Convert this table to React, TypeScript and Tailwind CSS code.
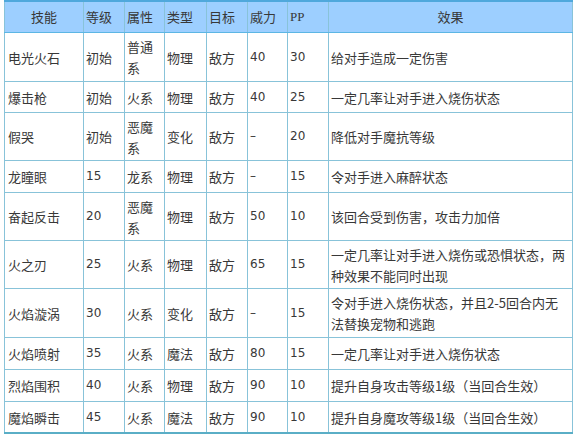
import React from "react";

type Row = { h: string; cells: React.ReactNode[] };

const rows: Row[] = [
  { h: "h-[49px]", cells: ["电光火石", "初始", <>普通<br />系</>, "物理", "敌方", "40", "30", "给对手造成一定伤害"] },
  { h: "h-[31px]", cells: ["爆击枪", "初始", "火系", "物理", "敌方", "40", "25", "一定几率让对手进入烧伤状态"] },
  { h: "h-[48px]", cells: ["假哭", "初始", <>恶魔<br />系</>, "变化", "敌方", "–", "20", "降低对手魔抗等级"] },
  { h: "h-[32px]", cells: ["龙瞳眼", "15", "龙系", "物理", "敌方", "–", "15", "令对手进入麻醉状态"] },
  { h: "h-[48px]", cells: ["奋起反击", "20", <>恶魔<br />系</>, "物理", "敌方", "50", "10", "该回合受到伤害，攻击力加倍"] },
  { h: "h-[48px]", cells: ["火之刃", "25", "火系", "物理", "敌方", "65", "15", <>一定几率让对手进入烧伤或恐惧状态，两<br />种效果不能同时出现</>] },
  { h: "h-[49px]", cells: ["火焰漩涡", "30", "火系", "变化", "敌方", "–", "15", <>令对手进入烧伤状态，并且2-5回合内无<br />法替换宠物和逃跑</>] },
  { h: "h-[32px]", cells: ["火焰喷射", "35", "火系", "魔法", "敌方", "80", "15", "一定几率让对手进入烧伤状态"] },
  { h: "h-[32px]", cells: ["烈焰围积", "40", "火系", "物理", "敌方", "90", "10", "提升自身攻击等级1级（当回合生效）"] },
  { h: "h-[30px]", cells: ["魔焰瞬击", "45", "火系", "魔法", "敌方", "90", "10", "提升自身魔攻等级1级（当回合生效）"] },
];

const headers = ["技能", "等级", "属性", "类型", "目标", "威力", "PP", "效果"];
const numCols = new Set([1, 5, 6]);

export default function App() {
  return (
    <div
      className="w-[579px] h-[434px] bg-white overflow-hidden text-[#383838]"
      style={{ fontFamily: '"Noto Sans CJK SC", "Noto Sans", sans-serif' }}
    >
      <div className="ml-[4px] w-[569px] border-t-2 border-t-[#4fa8dc] border-b-2 border-b-[#5aaec6]">
        <div className="grid grid-cols-[79px_41px_40px_42px_41px_40px_41px_245px] h-[31px] bg-[#9dcfff] border-b border-b-[#5cb6e4]">
          {headers.map((h, i) => (
            <div
              key={i}
              className={`flex items-center text-[13px] border-l border-l-[#88c3d9] ${i === 7 ? "border-r border-r-[#88c3d9] justify-center" : i === 0 ? "justify-center" : "pl-[2px]"} ${i === 6 ? "text-[12px]" : ""}`}
              style={i === 6 ? { fontFamily: '"Liberation Serif", serif' } : undefined}
            >
              {h}
            </div>
          ))}
        </div>
        {rows.map((r, ri) => {
          return (
            <div
              key={ri}
              className={`grid grid-cols-[79px_41px_40px_42px_41px_40px_41px_245px] ${r.h} ${ri < rows.length - 1 ? "border-b border-b-[#88c3d9]" : ""}`}
            >
              {r.cells.map((c, ci) => {
                const isNum = numCols.has(ci) && typeof c === "string" && /^[0-9–]+$/.test(c);
                return (
                  <div
                    key={ci}
                    className={`flex items-center border-l border-l-[#88c3d9] leading-[21px] whitespace-nowrap ${ci === 7 ? "border-r border-r-[#88c3d9] pl-[2px]" : ci === 0 ? "pl-[3px]" : "pl-[2px]"} ${isNum ? "text-[12px]" : "text-[13px]"}`}
                    style={isNum ? { fontFamily: '"DejaVu Sans", sans-serif' } : undefined}
                  >
                    <div>{c}</div>
                  </div>
                );
              })}
            </div>
          );
        })}
      </div>
    </div>
  );
}
